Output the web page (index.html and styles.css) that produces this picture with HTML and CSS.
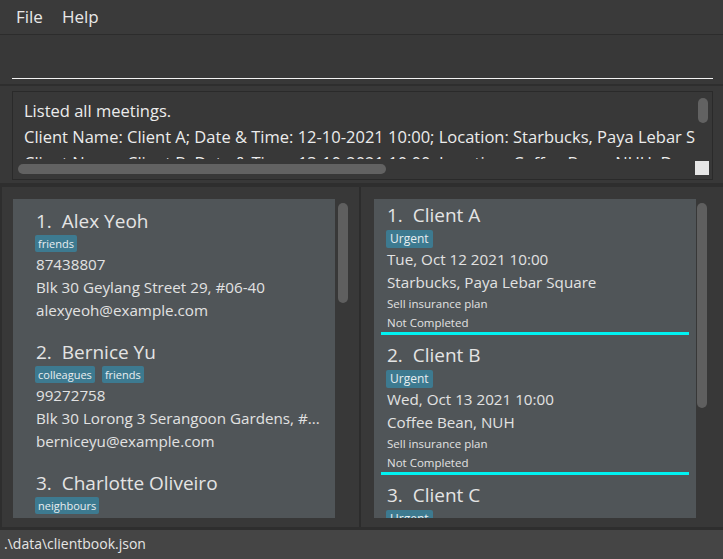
FILE: index.html
```html
<!DOCTYPE html>
<html>
<head>
<meta charset="utf-8">
<link rel="stylesheet" href="styles.css">
</head>
<body>
<div class="app">
  <div class="menubar">
    <span class="menu-item">File</span>
    <span class="menu-item">Help</span>
  </div>
  <div class="command">
    <div class="command-input"></div>
  </div>
  <div class="result">
    <div class="result-box">
      <div class="result-view">
        <div class="result-line">Listed all meetings.</div>
        <div class="result-line">Client Name: Client A; Date &amp; Time: 12-10-2021 10:00; Location: Starbucks, Paya Lebar Square; Description: Sell insurance plan</div>
        <div class="result-line">Client Name: Client B; Date &amp; Time: 13-10-2021 10:00; Location: Coffee Bean, NUH; Description: Sell insurance plan</div>
      </div>
      <div class="hscroll"></div>
      <div class="vscroll"></div>
      <div class="corner"></div>
    </div>
  </div>
  <div class="panels">
    <div class="pane pane-left">
      <div class="list">
        <div class="person">
          <div class="name">1.&nbsp; Alex Yeoh</div>
          <div class="tags"><span class="tag">friends</span></div>
          <div class="field">87438807</div>
          <div class="field">Blk 30 Geylang Street 29, #06-40</div>
          <div class="field">alexyeoh@example.com</div>
        </div>
        <div class="person">
          <div class="name">2.&nbsp; Bernice Yu</div>
          <div class="tags"><span class="tag">colleagues</span><span class="tag">friends</span></div>
          <div class="field">99272758</div>
          <div class="field">Blk 30 Lorong 3 Serangoon Gardens, #...</div>
          <div class="field">berniceyu@example.com</div>
        </div>
        <div class="person">
          <div class="name">3.&nbsp; Charlotte Oliveiro</div>
          <div class="tags"><span class="tag">neighbours</span></div>
          <div class="field">93210283</div>
          <div class="field">Blk 11 Ang Mo Kio Street 74, #11-04</div>
          <div class="field">charlotte@example.com</div>
        </div>
      </div>
      <div class="thumb thumb-left"></div>
    </div>
    <div class="pane pane-right">
      <div class="list">
        <div class="meeting">
          <div class="name">1.&nbsp; Client A</div>
          <div class="tags"><span class="tag tag-m">Urgent</span></div>
          <div class="field">Tue, Oct 12 2021 10:00</div>
          <div class="field">Starbucks, Paya Lebar Square</div>
          <div class="small">Sell insurance plan</div>
          <div class="small">Not Completed</div>
        </div>
        <div class="meeting">
          <div class="name">2.&nbsp; Client B</div>
          <div class="tags"><span class="tag tag-m">Urgent</span></div>
          <div class="field">Wed, Oct 13 2021 10:00</div>
          <div class="field">Coffee Bean, NUH</div>
          <div class="small">Sell insurance plan</div>
          <div class="small">Not Completed</div>
        </div>
        <div class="meeting">
          <div class="name">3.&nbsp; Client C</div>
          <div class="tags"><span class="tag tag-m">Urgent</span></div>
          <div class="field">Thu, Oct 14 2021 10:00</div>
          <div class="field">Starbucks, Paya Lebar Square</div>
          <div class="small">Sell insurance plan</div>
          <div class="small">Not Completed</div>
        </div>
      </div>
      <div class="thumb thumb-right"></div>
    </div>
  </div>
  <div class="status">.\data\clientbook.json</div>
</div>
</body>
</html>
```

FILE: styles.css
```css
* { box-sizing: border-box; }
html, body {
  margin: 0;
  padding: 0;
  background: #383838;
  font-family: "Open Sans", "Noto Sans", sans-serif;
  color: #e2e2e2;
}
.app {
  width: 723px;
  height: 559px;
  display: flex;
  flex-direction: column;
  overflow: hidden;
}
.menubar {
  height: 35px;
  background: #3a3a3a;
  border-bottom: 1px solid #2c2c2c;
  display: flex;
  align-items: center;
  padding: 0 0 1px 16px;
  gap: 19px;
  font-size: 17px;
  color: #e8e8e8;
}
.command {
  height: 51px;
  background: #383838;
  border-bottom: 2px solid #2e2e2e;
  padding: 0 10px 0 12px;
}
.command-input {
  height: 44px;
  border-bottom: 1px solid #f2f2f2;
}
.result {
  height: 101px;
  background: #383838;
  border-bottom: 4px solid #2e2e2e;
  padding: 5px 10px 0 12px;
}
.result-box {
  position: relative;
  height: 89px;
  border: 1px solid #2a2a2a;
  background: #383838;
}
.result-view {
  margin: 6px 0 0 11px;
  width: 671px;
  height: 61px;
  overflow: hidden;
  white-space: nowrap;
  font-size: 16.5px;
  line-height: 26px;
  color: #ececec;
}
.hscroll {
  position: absolute;
  left: 5px;
  top: 72px;
  width: 368px;
  height: 10px;
  border-radius: 5px;
  background: #626262;
}
.vscroll {
  position: absolute;
  left: 685px;
  top: 6px;
  width: 10px;
  height: 25px;
  border-radius: 5px;
  background: #626262;
}
.corner {
  position: absolute;
  left: 682px;
  top: 69px;
  width: 14px;
  height: 14px;
  background: #e6e6e6;
}
.panels {
  height: 343px;
  display: flex;
  border-bottom: 3px solid #2e2e2e;
}
.pane {
  position: relative;
  height: 340px;
  padding: 12px 0 9px 13px;
  background: #383838;
}
.pane-left {
  width: 361px;
  border-left: 2px solid #2e2e2e;
  padding-left: 11px;
  border-right: 2px solid #2c2c2c;
}
.pane-right {
  flex: 1;
  padding-left: 13px;
}
.list {
  width: 322px;
  height: 319px;
  background: #505558;
  overflow: hidden;
}
.person {
  padding: 8px 0 8px 23px;
}
.name {
  font-size: 19px;
  line-height: 28px;
  color: #e4e4e4;
  white-space: nowrap;
}
.tags {
  display: flex;
  gap: 7px;
  margin: 0 0 1px -1px;
}
.tag {
  display: inline-block;
  height: 17px;
  line-height: 17px;
  padding: 0 3px;
  font-size: 11px;
  color: #e8eef0;
  background: #3d7a90;
  border-radius: 2px;
}
.tag-m {
  height: 18px;
  line-height: 18px;
  font-size: 12px;
  padding: 0 4px;
}
.field {
  font-size: 15.2px;
  line-height: 23px;
  white-space: nowrap;
  color: #e2e2e2;
}
.meeting {
  margin: 0 7px 4px 7px;
  padding: 2px 6px 0 6px;
  border-bottom: 3px solid #00f2f2;
}
.meeting .tags { margin: 1px 0 0 -1px; }
.small {
  font-size: 11.5px;
  line-height: 19px;
  color: #e2e2e2;
}
.thumb {
  position: absolute;
  width: 10px;
  border-radius: 5px;
  background: #5f5f5f;
}
.thumb-left { left: 336px; top: 16px; height: 100px; }
.thumb-right { left: 336px; top: 16px; height: 205px; }
.status {
  flex: 1;
  background: #454545;
  font-size: 14px;
  line-height: 28px;
  padding-left: 4px;
  color: #e6e6e6;
}
```
